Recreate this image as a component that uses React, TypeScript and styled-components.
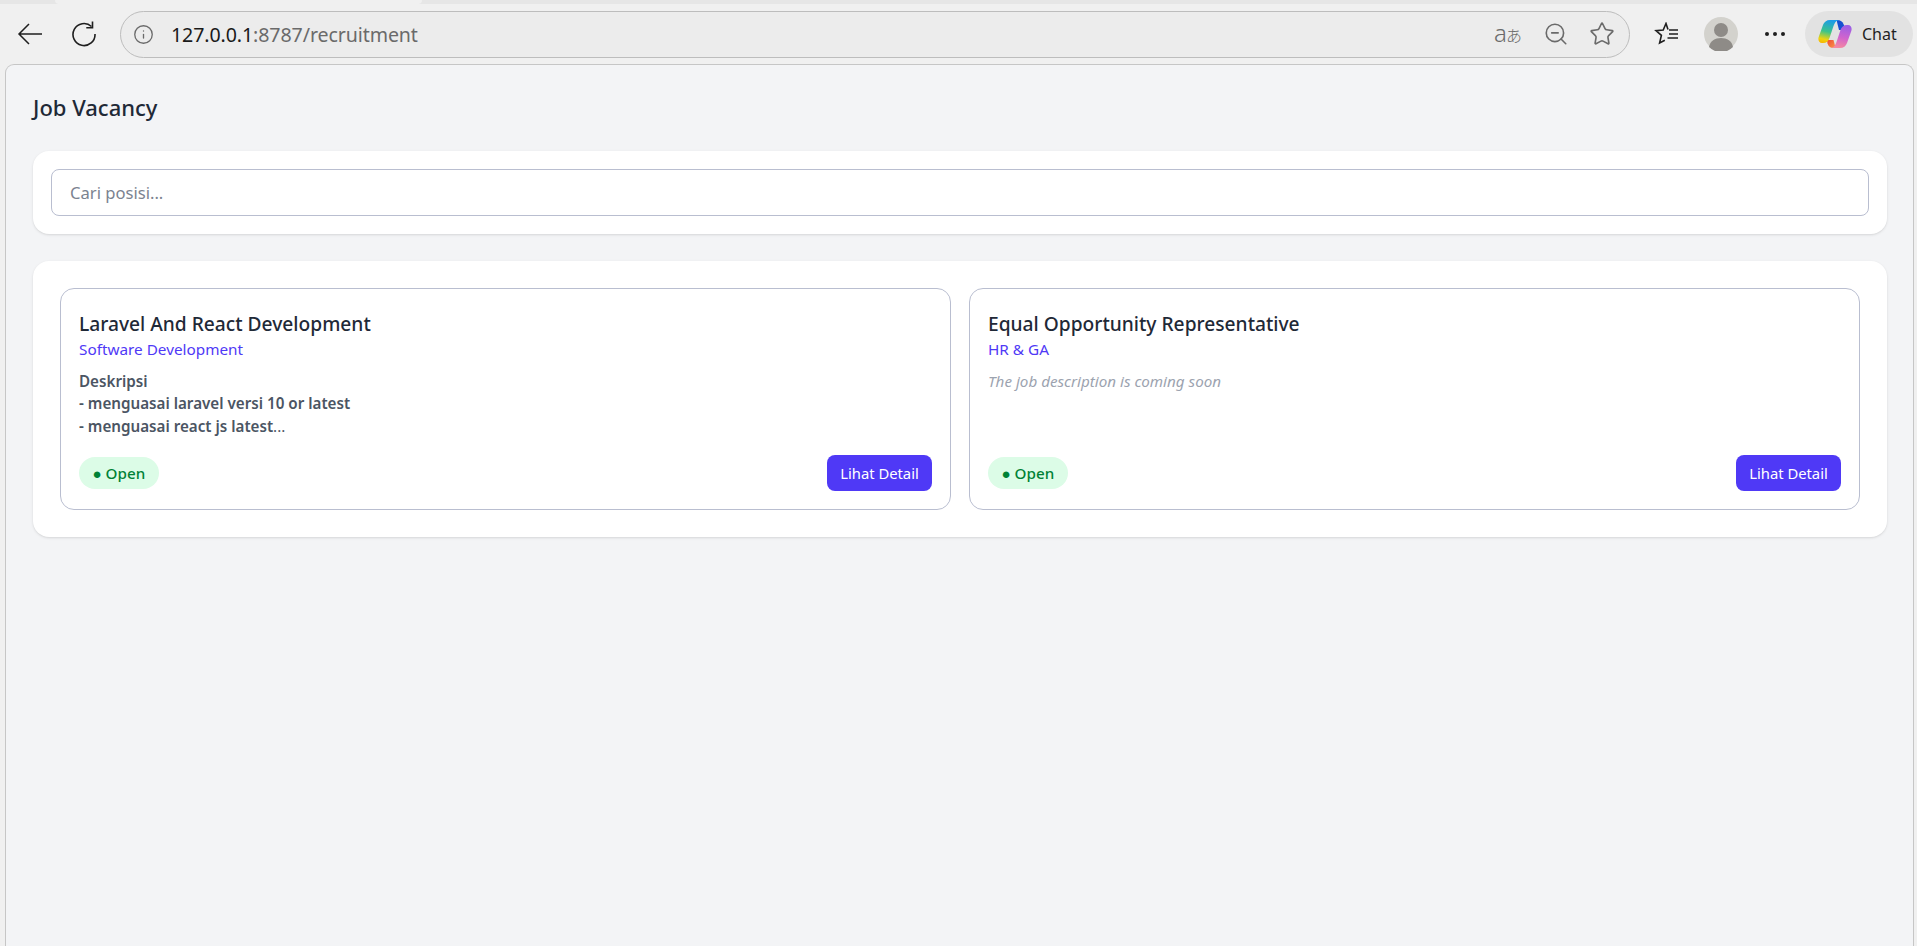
import styled, { createGlobalStyle } from 'styled-components'
import { ZoomOut, Star, Info } from 'lucide-react'

const GlobalStyle = createGlobalStyle`
    html, body {
        margin: 0;
        padding: 0;
        height: 100%;
        overflow: hidden;
        background: #f0f0f0;
    }
    * {
        box-sizing: border-box;
    }
    #root {
        height: 100%;
    }
`

// browser chrome
const Window = styled.div`
    width: 1917px;
    height: 946px;
    display: flex;
    flex-direction: column;
    font-family: "Noto Sans", "Open Sans", sans-serif;
    background: #f0f0f0;
`
const TabStrip = styled.div`
    height: 4px;
    display: flex;
    background: #e6e6e6;
`
const ActiveTab = styled.div`
    width: 367px;
    margin-left: 55px;
    background: #f0f0f0;
    border-radius: 0 0 6px 6px;
`
const Toolbar = styled.div`
    height: 60px;
    display: flex;
    align-items: center;
    padding-left: 17px;
`
const NavButton = styled.div<{ $mr: number }>`
    width: 26px;
    height: 26px;
    display: flex;
    align-items: center;
    justify-content: center;
    margin-right: ${p => p.$mr}px;
    color: #1f1f1f;
`
const AddressBar = styled.div`
    width: 1510px;
    height: 47px;
    margin-left: -1px;
    display: flex;
    align-items: center;
    padding: 0 14px 0 12px;
    background: #ececec;
    border: 1.5px solid #bdbdbd;
    border-radius: 24px;
    color: #5f5f5f;
`
const Url = styled.div`
    margin-left: 17px;
    font-size: 19.6px;
    letter-spacing: -0.1px;
    color: #6a6a6a;
    flex: 1;
    & b {
        font-weight: 400;
        color: #1a1a1a;
    }
`
const AddressIcon = styled.div<{ $ml?: number }>`
    display: flex;
    align-items: center;
    margin-left: ${p => p.$ml ?? 0}px;
    color: #6a6a6a;
`
const TranslateGlyph = styled.span`
    font-size: 24px;
    line-height: 24px;
    font-weight: 300;
    color: #6a6a6a;
    letter-spacing: -1px;
    font-family: "Noto Sans", "Noto Sans CJK JP", sans-serif;
    & small {
        font-size: 16px;
    }
`
const RightTools = styled.div`
    display: flex;
    align-items: center;
    margin-left: 24px;
`
const AvatarSlot = styled.div`
    display: flex;
    margin-left: 24px;
`
const Dots = styled.div`
    width: 20px;
    margin-left: 27px;
    margin-right: 20px;
    display: flex;
    justify-content: space-between;
    & i {
        width: 4px;
        height: 4px;
        border-radius: 50%;
        background: #1f1f1f;
    }
`
const ChatPill = styled.div`
    width: 108px;
    height: 46px;
    display: flex;
    align-items: center;
    padding-left: 13px;
    gap: 10px;
    border-radius: 23px;
    background: #e2e2e2;
    color: #1f1f1f;
    font-size: 16px;
`

// page
const Page = styled.main`
    flex: 1;
    margin: 0 3px 0 5px;
    padding: 27px 26px 0 27px;
    background: #f3f4f6;
    border: 1px solid #c6c6c6;
    border-bottom: none;
    border-radius: 9px 9px 0 0;
`
const Heading = styled.h1`
    margin: 0 0 27px 0;
    height: 32px;
    line-height: 30px;
    font-size: 22px;
    font-weight: 500;
    color: #1f2937;
`
const Panel = styled.section<{ $pad: string }>`
    background: #fff;
    border-radius: 16px;
    padding: ${p => p.$pad};
    margin-bottom: 27px;
    box-shadow: 0 1px 3px rgba(0, 0, 0, 0.1), 0 1px 2px -1px rgba(0, 0, 0, 0.1);
`
const SearchInput = styled.input`
    display: block;
    width: 100%;
    height: 47px;
    padding: 0 18px;
    border: 1px solid #b9bed0;
    border-radius: 8px;
    background: #fff;
    font-family: inherit;
    font-size: 16.6px;
    outline: none;
    &::placeholder {
        color: #7b8390;
        opacity: 1;
    }
`
const JobGrid = styled.div`
    display: grid;
    grid-template-columns: 1fr 1fr;
    gap: 18px;
`
const JobCard = styled.article`
    height: 222px;
    display: flex;
    flex-direction: column;
    padding: 20px 18px 18px;
    border: 1px solid #b9bed0;
    border-radius: 14px;
    background: #fff;
`
const JobTitle = styled.h2`
    margin: 0;
    font-size: 19.2px;
    line-height: 29px;
    font-weight: 500;
    color: #1f2937;
`
const Department = styled.div`
    font-size: 15.3px;
    line-height: 22px;
    color: #4f39f6;
`
const Description = styled.div`
    margin-top: 10px;
    font-size: 15.2px;
    line-height: 22.4px;
    font-weight: 600;
    color: #4b5563;
    & span {
        font-weight: 400;
    }
`
const Placeholder = styled.div`
    margin-top: 10px;
    font-size: 15.2px;
    line-height: 23px;
    font-style: italic;
    color: #9ca3af;
`
const CardFooter = styled.div`
    margin-top: auto;
    display: flex;
    align-items: center;
    justify-content: space-between;
`
const Badge = styled.span`
    height: 32px;
    padding: 0 13.5px;
    display: flex;
    align-items: center;
    border-radius: 16px;
    background: #dcfce7;
    color: #008236;
    font-size: 15.2px;
    font-weight: 500;
`
const DetailButton = styled.button`
    height: 36px;
    width: 105px;
    border: none;
    border-radius: 8px;
    background: #4f39f6;
    color: #fff;
    font-family: inherit;
    font-size: 14.8px;
    cursor: pointer;
`

const BackIcon = () => (
    <svg width="26" height="24" viewBox="0 0 26 24" fill="none" stroke="currentColor" strokeWidth="1.5">
        <path d="M25 12H2M12 2 2 12l10 10" />
    </svg>
)

const ReloadIcon = () => (
    <svg width="26" height="26" viewBox="0 0 26 26" fill="none" stroke="currentColor" strokeWidth="1.6">
        <path d="M20.5 5.5A11 11 0 1 0 24 13" />
        <path d="M21.5 0.5v6.2h-6.2" />
    </svg>
)

const FavoritesIcon = () => (
    <svg width="26" height="24" viewBox="0 0 26 24" fill="none" stroke="#1f1f1f" strokeWidth="1.6">
        <path d="M14 7.5 12 1.5 9.2 8 2 8.7l5.4 4.7L5.6 21l5.2-2.8" />
        <path d="M15 8h9M15 12h9M13.5 16H24" strokeWidth="1.5" />
    </svg>
)

const Avatar = () => (
    <svg width="34" height="34" viewBox="0 0 34 34">
        <circle cx="17" cy="17" r="17" fill="#d3d2cd" />
        <circle cx="17" cy="13" r="7" fill="#8e8b87" />
        <path d="M5 30c1-6 6-9 12-9s11 3 12 9a17 17 0 0 1-24 0z" fill="#8e8b87" />
    </svg>
)

const CopilotLogo = () => (
    <svg width="34" height="30" viewBox="0 0 34 30">
        <defs>
            <linearGradient id="cpA" x1="0.5" y1="0" x2="0.3" y2="1">
                <stop offset="0" stopColor="#1b9be8" />
                <stop offset="0.5" stopColor="#3cc48a" />
                <stop offset="0.85" stopColor="#f0d30e" />
                <stop offset="1" stopColor="#f5b800" />
            </linearGradient>
            <linearGradient id="cpB" x1="0.6" y1="0" x2="0.4" y2="1">
                <stop offset="0" stopColor="#9a5fe6" />
                <stop offset="0.55" stopColor="#d264cc" />
                <stop offset="1" stopColor="#f58aa0" />
            </linearGradient>
            <linearGradient id="cpC" x1="0" y1="0" x2="1" y2="1">
                <stop offset="0" stopColor="#ef4a32" />
                <stop offset="1" stopColor="#fb9a4a" />
            </linearGradient>
        </defs>
        <path d="M19 1c3.500 0 5.700 1.500 6.700 4.500L27.500 11H21l-2-8z" fill="#1550d0" />
        <path d="M9 21h6.500l2 7.500c-.3.300-1 .5-2 .5-3 0-5-1.500-6-4.500z" fill="url(#cpC)" />
        <path d="M12 1h9c-3 .6-4.500 3-5.500 6l-4 12c-1 3-3 5-6.500 5H4c-3 0-4.300-3-3.300-6L5 6c1-3 3.500-5 7-5z" fill="url(#cpA)" />
        <path d="M22 29h-9c3-.6 4.500-3 5.500-6l4-12c1-3 3-5 6.500-5h1c3 0 4.300 3 3.300 6L29 24c-1 3-3.500 5-7 5z" fill="url(#cpB)" />
    </svg>
)

interface Job {
    title: string
    department: string
}

const jobs: Job[] = [
    { title: 'Laravel And React Development', department: 'Software Development' },
    { title: 'Equal Opportunity Representative', department: 'HR & GA' },
]

const App = () => {
    return (
        <Window>
            <GlobalStyle />
            <TabStrip>
                <ActiveTab />
            </TabStrip>
            <Toolbar>
                <NavButton $mr={28}><BackIcon /></NavButton>
                <NavButton $mr={24}><ReloadIcon /></NavButton>
                <AddressBar>
                    <AddressIcon><Info size={21} strokeWidth={1.5} /></AddressIcon>
                    <Url><b>127.0.0.1</b>:8787/recruitment</Url>
                    <TranslateGlyph>a<small>あ</small></TranslateGlyph>
                    <AddressIcon $ml={22}><ZoomOut size={26} strokeWidth={1.5} /></AddressIcon>
                    <AddressIcon $ml={20}><Star size={26} strokeWidth={1.5} /></AddressIcon>
                </AddressBar>
                <RightTools>
                    <FavoritesIcon />
                    <AvatarSlot><Avatar /></AvatarSlot>
                    <Dots><i /><i /><i /></Dots>
                    <ChatPill><CopilotLogo />Chat</ChatPill>
                </RightTools>
            </Toolbar>
            <Page>
                <Heading>Job Vacancy</Heading>
                <Panel $pad="18px">
                    <SearchInput placeholder="Cari posisi..." />
                </Panel>
                <Panel $pad="27px">
                    <JobGrid>
                        {jobs.map((job, i) => (
                            <JobCard key={job.title}>
                                <JobTitle>{job.title}</JobTitle>
                                <Department>{job.department}</Department>
                                {i === 0 ? (
                                    <Description>
                                        Deskripsi<br />
                                        - menguasai laravel versi 10 or latest<br />
                                        - menguasai react js latest<span>...</span>
                                    </Description>
                                ) : (
                                    <Placeholder>The job description is coming soon</Placeholder>
                                )}
                                <CardFooter>
                                    <Badge>● Open</Badge>
                                    <DetailButton>Lihat Detail</DetailButton>
                                </CardFooter>
                            </JobCard>
                        ))}
                    </JobGrid>
                </Panel>
            </Page>
        </Window>
    )
}

export default App
